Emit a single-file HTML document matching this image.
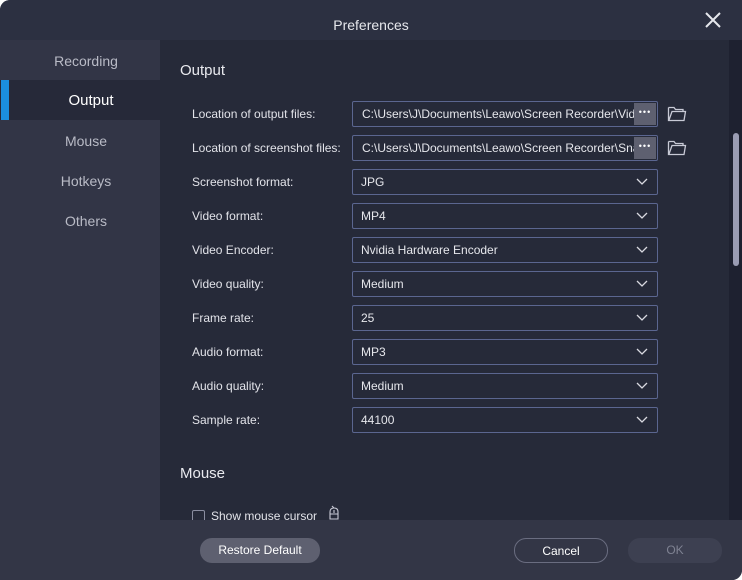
<!DOCTYPE html><html><head><style>
*{margin:0;padding:0;box-sizing:border-box}
body{width:742px;height:580px;background:#fff;font-family:"Segoe UI","Liberation Sans",sans-serif;overflow:hidden}
.win{position:absolute;left:0;top:0;width:742px;height:580px;background:#262a39;border-radius:10px 0 10px 0;overflow:hidden}
.title{position:absolute;left:0;top:0;width:742px;height:40px;background:#2c3041;color:#e6e7ec;font-size:14px;text-align:center;line-height:50px;padding-left:-12px}
.close{position:absolute;right:20px;top:11px;width:18px;height:18px}
.side{position:absolute;left:0;top:40px;width:160px;height:480px;background:#323546}
.side div{height:40px;line-height:42px;text-align:center;color:#b9bbc6;font-size:14px;padding-left:12px}
.side .sel{background:#262939;color:#fff;font-size:15px;position:relative;padding-left:22px}
.side .sel:before{content:"";position:absolute;left:1px;top:0;width:8px;height:40px;background:#1b8fe0}
.scr{position:absolute;left:729px;top:40px;width:13px;height:480px;background:#1e2130}
.thumb{position:absolute;left:733px;top:133px;width:6px;height:133px;background:#9a9cb3;border-radius:3px}
h2{position:absolute;left:180px;font-size:15px;font-weight:normal;color:#e9eaef}
.lab{position:absolute;left:192px;font-size:12px;color:#e2e3e9}
.box{position:absolute;left:352px;width:306px;height:26px;border:1px solid #5b6690;border-radius:2px;color:#e6e7ec;font-size:12px;line-height:24px;padding-left:8px;white-space:nowrap;overflow:hidden}
.box .dots{position:absolute;right:1px;top:1px;width:22px;height:22px;background:#5e6070;color:#fff;text-align:center;line-height:18px;font-size:9px;letter-spacing:1px}
.chev{position:absolute;right:9px;top:8px}
.fold{position:absolute;left:667px}
.foot{position:absolute;left:0;top:520px;width:742px;height:60px;background:#333646}
.btn{position:absolute;top:538px;height:25px;border-radius:12px;font-size:12px;text-align:center;line-height:25px}
</style></head><body><div class="win">
<div class="title">Preferences
<svg class="close" viewBox="0 0 18 18"><path d="M2 2L16 16M16 2L2 16" stroke="#e6e7ec" stroke-width="2"/></svg></div>
<div class="side"><div>Recording</div><div class="sel">Output</div><div>Mouse</div><div>Hotkeys</div><div>Others</div></div>
<h2 style="top:62px">Output</h2>
<div class="lab" style="top:107px">Location of output files:</div>
<div class="box" style="top:101px;padding-left:9px">C:\Users\J\Documents\Leawo\Screen Recorder\Vid<span class="dots">•••</span></div>
<div class="lab" style="top:141px">Location of screenshot files:</div>
<div class="box" style="top:135px;padding-left:9px">C:\Users\J\Documents\Leawo\Screen Recorder\Sna<span class="dots">•••</span></div>
<svg class="fold" style="top:104px" width="20" height="18" viewBox="0 0 20 18"><path d="M1.5 3.5V16.5H17L18.5 7.5H5L2 16M1.5 3.5H7L8.5 5.5H16V7.5" fill="none" stroke="#c8cad6" stroke-width="1.3"/></svg>
<svg class="fold" style="top:138px" width="20" height="18" viewBox="0 0 20 18"><path d="M1.5 3.5V16.5H17L18.5 7.5H5L2 16M1.5 3.5H7L8.5 5.5H16V7.5" fill="none" stroke="#c8cad6" stroke-width="1.3"/></svg>
<div class="lab" style="top:175px">Screenshot format:</div><div class="box" style="top:169px">JPG</div>
<div class="lab" style="top:209px">Video format:</div><div class="box" style="top:203px">MP4</div>
<div class="lab" style="top:243px">Video Encoder:</div><div class="box" style="top:237px">Nvidia Hardware Encoder</div>
<div class="lab" style="top:277px">Video quality:</div><div class="box" style="top:271px">Medium</div>
<div class="lab" style="top:311px">Frame rate:</div><div class="box" style="top:305px">25</div>
<div class="lab" style="top:345px">Audio format:</div><div class="box" style="top:339px">MP3</div>
<div class="lab" style="top:379px">Audio quality:</div><div class="box" style="top:373px">Medium</div>
<div class="lab" style="top:413px">Sample rate:</div><div class="box" style="top:407px">44100</div>
<h2 style="top:465px">Mouse</h2>
<div style="position:absolute;left:192px;top:510px;width:13px;height:13px;border:1px solid #8a8da0;border-radius:2px"></div>
<div class="lab" style="top:509px;left:211px">Show mouse cursor</div>
<svg style="position:absolute;left:328px;top:505px" width="12" height="16" viewBox="0 0 12 16"><path d="M2 7Q2 3 6 3Q10 3 10 7V14H2Z M2 9H10 M6 5V8 M4 1L6 3" fill="none" stroke="#c8cad6" stroke-width="1.1"/></svg>
<div class="scr"></div><div class="thumb"></div>
<div class="foot"></div>
<div class="btn" style="left:200px;width:120px;background:#5e6070;color:#fff">Restore Default</div>
<div class="btn" style="left:514px;width:94px;border:1px solid #6a6d80;color:#fff">Cancel</div>
<div class="btn" style="left:628px;width:94px;background:#3d4051;color:#7f8292">OK</div>
</div>
<script>document.querySelectorAll('.box').forEach(function(b){if(!b.querySelector('.dots')){b.insertAdjacentHTML('beforeend','<svg class="chev" width="12" height="8" viewBox="0 0 12 8"><path d="M1 1L6 6L11 1" fill="none" stroke="#d8d9e0" stroke-width="1.3"/></svg>')}});</script>
</body></html>
